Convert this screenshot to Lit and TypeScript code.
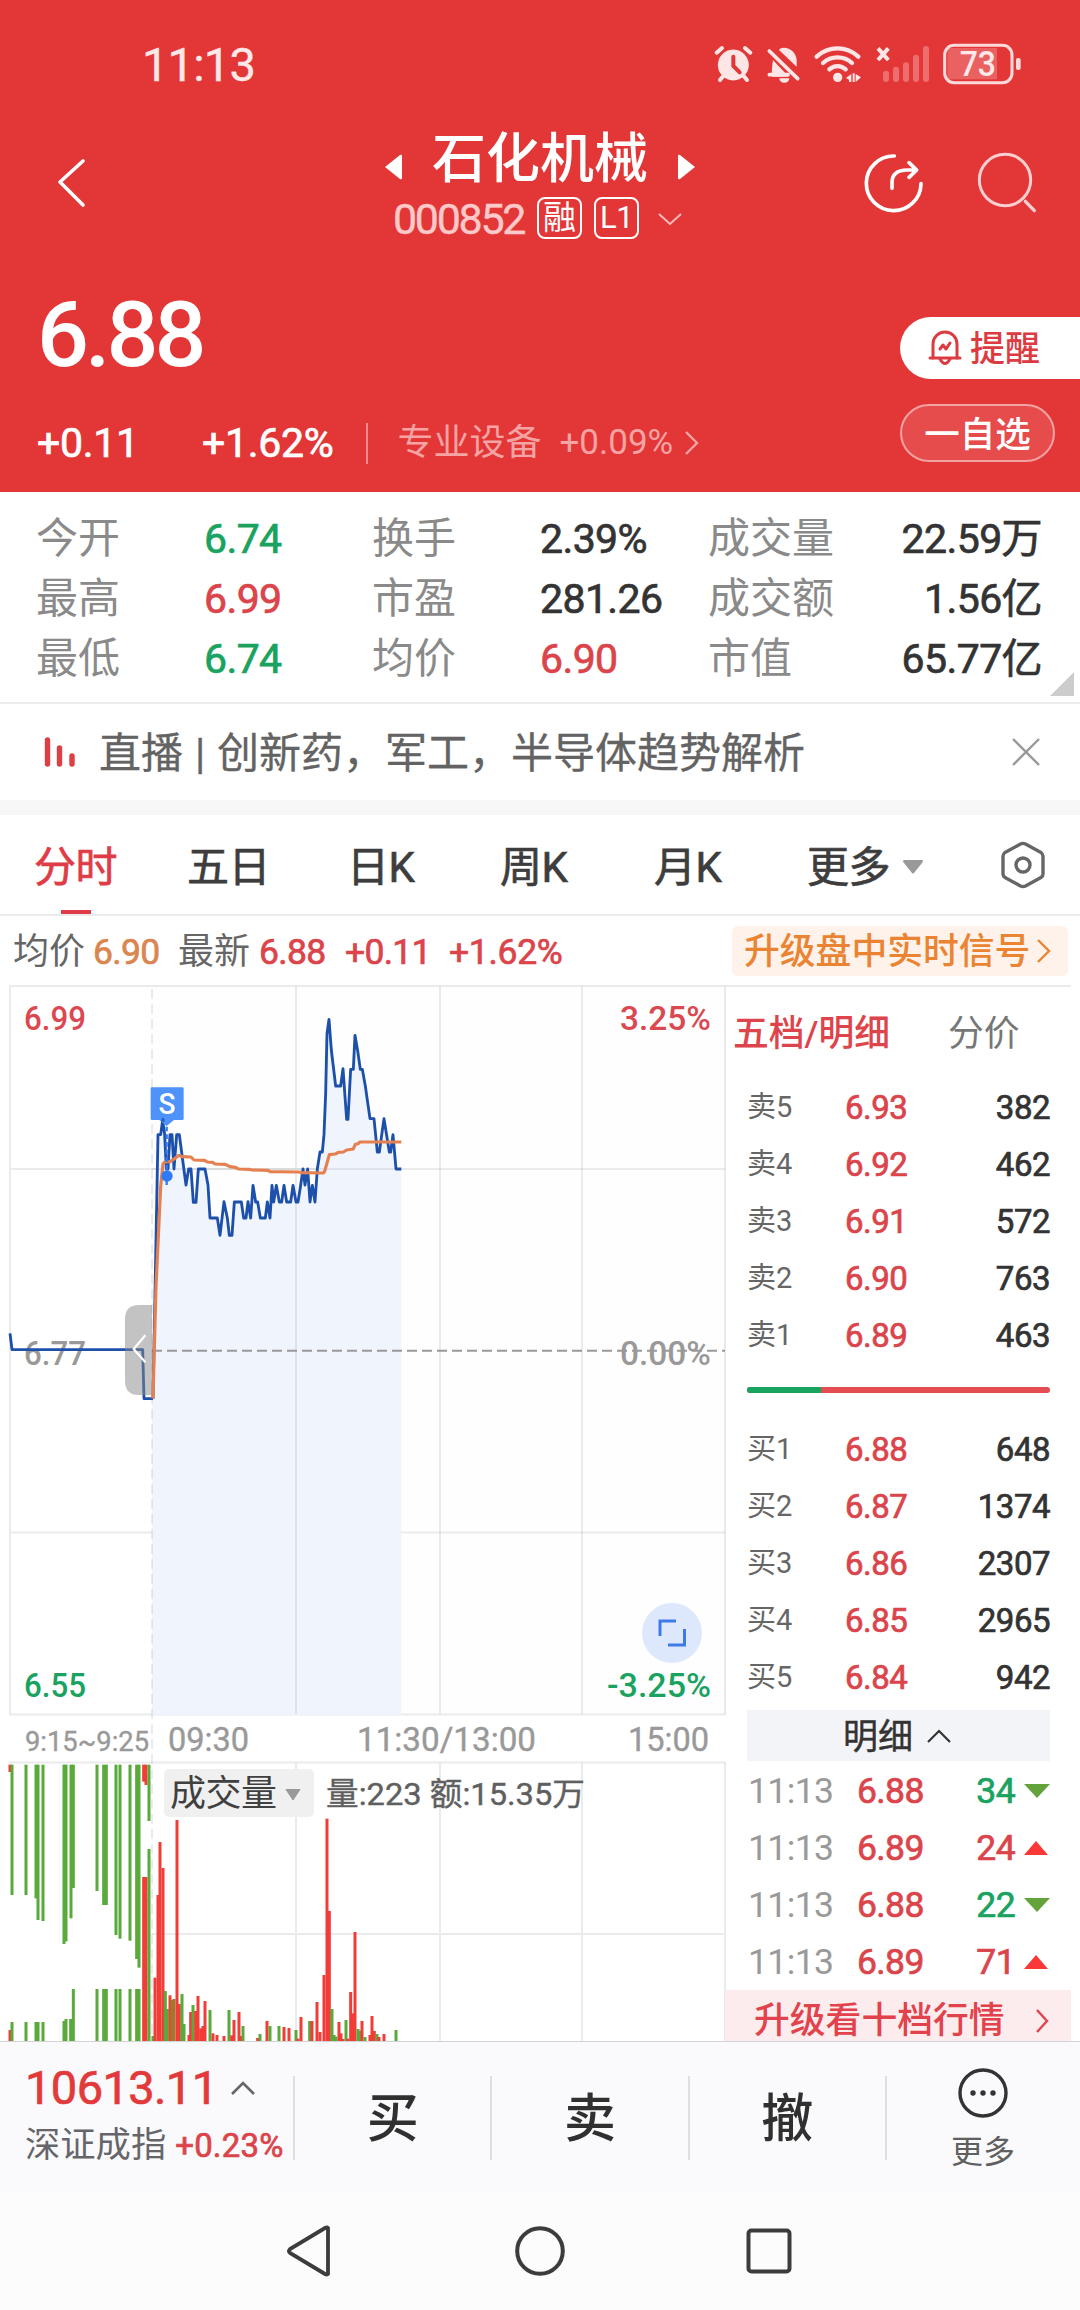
import { LitElement, html, svg, css } from "lit";
import { customElement } from "lit/decorators.js";

type Tone = "up" | "down" | "flat";

interface Stat { label: string; value: string; tone: Tone; }
interface Quote { label: string; price: string; volume: string; }
interface Trade { time: string; price: string; volume: string; tone: Tone; }

const STATS: Stat[] = [
  { label: "今开", value: "6.74", tone: "down" },
  { label: "换手", value: "2.39%", tone: "flat" },
  { label: "成交量", value: "22.59万", tone: "flat" },
  { label: "最高", value: "6.99", tone: "up" },
  { label: "市盈", value: "281.26", tone: "flat" },
  { label: "成交额", value: "1.56亿", tone: "flat" },
  { label: "最低", value: "6.74", tone: "down" },
  { label: "均价", value: "6.90", tone: "up" },
  { label: "市值", value: "65.77亿", tone: "flat" },
];

const SELLS: Quote[] = [
  { label: "卖5", price: "6.93", volume: "382" },
  { label: "卖4", price: "6.92", volume: "462" },
  { label: "卖3", price: "6.91", volume: "572" },
  { label: "卖2", price: "6.90", volume: "763" },
  { label: "卖1", price: "6.89", volume: "463" },
];

const BUYS: Quote[] = [
  { label: "买1", price: "6.88", volume: "648" },
  { label: "买2", price: "6.87", volume: "1374" },
  { label: "买3", price: "6.86", volume: "2307" },
  { label: "买4", price: "6.85", volume: "2965" },
  { label: "买5", price: "6.84", volume: "942" },
];

const TRADES: Trade[] = [
  { time: "11:13", price: "6.88", volume: "34", tone: "down" },
  { time: "11:13", price: "6.89", volume: "24", tone: "up" },
  { time: "11:13", price: "6.88", volume: "22", tone: "down" },
  { time: "11:13", price: "6.89", volume: "71", tone: "up" },
];

// Series are stored in thirds of a pixel.
const PRE_OPEN = "30,1060 36,1109 428,1109 432,1256 459,1256";
const PRICE =
  "459,1256 474,464 482,464 488,420 494,464 499,567 504,567 510,464 516,464 522,567 530,464 538,464 548,540 558,615 566,567 573,567 580,667 588,667 595,567 615,567 624,615 630,714 652,714 660,766 672,665 682,714 688,766 696,766 703,666 724,666 731,714 738,714 744,665 752,714 759,616 767,666 773,666 781,714 796,714 802,666 810,714 816,616 821,666 829,616 838,666 845,666 852,616 860,666 872,666 879,616 888,666 894,666 902,616 909,567 915,615 923,567 930,666 937,616 945,666 952,567 960,516 967,516 972,464 977,340 981,160 987,118 994,210 1007,318 1022,318 1029,266 1040,418 1044,418 1052,268 1060,268 1065,166 1073,212 1081,268 1087,268 1096,318 1110,416 1122,416 1132,516 1138,516 1152,416 1168,516 1172,516 1179,464 1188,567 1204,567";
const AVERAGE =
  "459,1256 468,920 482,620 489,552 494,546 510,545 525,535 537,526 546,530 573,531 582,540 614,541 622,546 638,547 645,552 676,553 690,560 706,562 716,567 748,568 756,570 804,571 810,575 896,576 905,578 970,579 974,574 988,524 1006,522 1015,517 1030,516 1040,510 1060,507 1066,493 1074,491 1080,486 1204,486";

type Bar = [x: number, y: number, color: "r" | "g" | "b"];

const AUCTION_TOP: Bar[] = [
  [30, 216, "r"], [36, 585, "g"], [78, 585, "g"], [108, 595, "g"], [114, 660, "g"], [129, 663, "g"],
  [192, 732, "g"], [198, 724, "g"], [213, 655, "g"], [220, 564, "g"], [291, 573, "g"], [311, 615, "g"],
  [319, 615, "g"], [348, 705, "g"], [360, 716, "g"], [390, 722, "g"], [410, 777, "g"], [417, 803, "g"],
  [431, 245, "r"], [438, 255, "r"], [447, 363, "g"],
];

const VOLUME: Bar[] = [
  [30, 990, "r"], [36, 966, "g"], [78, 966, "g"], [108, 966, "g"], [114, 966, "g"], [129, 966, "g"],
  [192, 963, "g"], [198, 957, "g"], [212, 957, "g"], [220, 867, "g"], [291, 867, "g"], [311, 867, "g"],
  [319, 867, "g"], [348, 867, "g"], [360, 867, "g"], [390, 867, "g"], [410, 867, "g"], [417, 867, "g"],
  [431, 531, "r"], [438, 531, "r"], [447, 447, "g"], [459, 1008, "g"], [465, 833, "r"], [474, 585, "r"],
  [480, 426, "r"], [489, 504, "r"], [496, 873, "g"], [502, 927, "g"], [510, 886, "r"], [516, 900, "b"],
  [522, 897, "b"], [531, 360, "r"], [538, 912, "r"], [546, 882, "g"], [552, 972, "g"], [567, 1005, "r"],
  [572, 936, "r"], [579, 915, "g"], [587, 933, "r"], [594, 888, "r"], [602, 985, "r"], [609, 978, "r"],
  [615, 903, "r"], [630, 930, "g"], [639, 1000, "r"], [651, 1005, "r"], [672, 1008, "r"], [687, 930, "g"],
  [695, 1006, "r"], [702, 960, "r"], [717, 936, "r"], [723, 1008, "r"], [729, 978, "g"], [773, 1014, "r"],
  [780, 1002, "g"], [801, 963, "r"], [810, 978, "g"], [837, 978, "g"], [852, 981, "r"], [867, 984, "r"],
  [888, 990, "g"], [894, 1016, "r"], [903, 951, "r"], [929, 963, "g"], [936, 963, "r"], [951, 906, "r"],
  [960, 996, "r"], [972, 825, "r"], [981, 356, "r"], [988, 633, "r"], [996, 927, "g"], [1002, 1005, "g"],
  [1008, 1010, "g"], [1017, 966, "r"], [1023, 1000, "r"], [1029, 1017, "r"], [1038, 960, "g"],
  [1044, 1016, "r"], [1052, 876, "r"], [1059, 940, "r"], [1065, 696, "r"], [1074, 987, "g"],
  [1080, 992, "g"], [1086, 963, "r"], [1095, 1011, "g"], [1110, 1005, "r"], [1116, 948, "r"],
  [1123, 993, "r"], [1131, 1002, "g"], [1137, 1011, "r"], [1152, 1002, "r"], [1188, 990, "g"],
];

const BAR_COLOR = { r: "#f23c37", g: "#58aa3b", b: "#a07a2c" };

const FONT = css`
  :host {
    display: block;
    font-family: Roboto, "Noto Sans CJK SC", sans-serif;
  }
  * { box-sizing: border-box; }
  svg { display: block; flex: none; }
  .up { color: #db444a; }
  .down { color: #1aa260; }
  .flat { color: #333; }
  .fig { font-weight: 400; -webkit-text-stroke: 0.7px currentColor; }
`;

@customElement("stock-header")
class StockHeader extends LitElement {
  static styles = [FONT, css`
    :host { background: #e23637; height: 492px; color: #fff; }
    .status { display: flex; height: 130px; padding: 30px 0 0 142px; justify-content: space-between; }
    .clock { font-size: 47px; line-height: 70px; color: #ffe8e8; letter-spacing: -0.8px; -webkit-text-stroke: 0.4px currentColor; }
    .title { display: flex; height: 130px; }
    .back { margin: 27px 0 0 53px; }
    .center { display: flex; flex-direction: column; align-items: center; width: 330px; margin-left: 286px; }
    .name-row { display: flex; align-items: center; justify-content: space-between; width: 312px; height: 60px; }
    .name { font-size: 54px; line-height: 60px; font-weight: 500; }
    .arrow { margin-top: 13px; }
    .code-row { display: flex; align-items: center; height: 44px; margin-top: 7px; width: 300px; }
    .code { font-size: 43px; line-height: 44px; color: #ffc9c9; letter-spacing: -2.3px; width: 147px; padding-left: 3px; -webkit-text-stroke: 0.4px currentColor; }
    .tag { width: 45px; height: 42px; border: 2px solid #fff; border-radius: 8px; display: flex; align-items: center; justify-content: center; line-height: 38px; margin-top: -2px; }
    .tag-cn { font-size: 33px; margin-right: 12px; }
    .tag-lv { font-size: 31px; margin-right: 19px; letter-spacing: -0.5px; }
    .tools { margin: 20px 0 0 auto; }
    .body { display: flex; justify-content: space-between; height: 232px; }
    .left { padding: 31px 0 0 37px; }
    .price { font-size: 91.5px; line-height: 88px; font-weight: 500; letter-spacing: -4px; }
    .change { display: flex; align-items: center; height: 44px; margin-top: 42px; font-size: 41px; line-height: 44px; letter-spacing: -0.3px; }
    .delta { width: 165px; }
    .percent { width: 164px; }
    .rule { width: 1.5px; height: 41px; background: #ee8a8a; }
    .sector { margin-left: 30px; font-size: 36px; font-weight: 400; color: #f6a3a4; letter-spacing: 0; width: 162px; }
    .sector-pct { font-size: 35px; font-weight: 400; color: #f6a3a4; letter-spacing: 0; width: 124px; }
    .right { display: flex; flex-direction: column; width: 180px; padding-top: 57px; gap: 25px; }
    .remind { display: flex; align-items: center; height: 62px; background: #fff; border-radius: 31px 0 0 31px; color: #dc3b41; font-size: 35px; padding-left: 28px; gap: 8px; line-height: 60px; font-weight: 500; }
    .remind span { padding-top: 3px; }
    .watch { width: 155px; height: 58px; border: 2px solid #f2a2a2; border-radius: 29px; background: #e74c4d; font-size: 35.5px; line-height: 54px; font-weight: 500; display: flex; align-items: center; justify-content: center; padding-top: 3px; }
  `];

  render() {
    return html`
      <div class="status">
        <div class="clock">11:13</div>
        <svg width="380" height="60" viewBox="0 0 1140 180">
          <g fill="#ffe6e6" stroke="#ffe6e6" stroke-linecap="round">
            <circle cx="100" cy="105" r="46"></circle>
            <path d="M50 68 L66 54 M151 68 L135 54 M70 138 L60 150 M131 138 L141 150" stroke-width="12" fill="none"></path>
            <path d="M100 80 V108 L119 127" stroke="#e23637" stroke-width="12" fill="none"></path>
            <path d="M216 140 C215 118 217 104 219 90 L266 140 Z M240 56 C256 48 287 58 290 90 V110 L237 60 Z" stroke="none"></path>
            <path d="M208 63 L293 146 M208 134 H264" stroke-width="11" fill="none"></path>
            <path d="M238 145 A15 13 0 0 0 268 145 Z" stroke="none"></path>
            <g fill="none" stroke-width="13">
              <path d="M350 80 A91 91 0 0 1 475 80"></path>
              <path d="M369 99 A64 64 0 0 1 456 99"></path>
              <path d="M388 118 A36 36 0 0 1 437 118"></path>
            </g>
            <circle cx="413" cy="142" r="14" stroke="none"></circle>
            <path d="M438 144 L454 132 V156 H447 V149 Z M483 142 L467 156 V132 Z M458 130 h6 v26 h-6 Z" stroke="none"></path>
            <path d="M534 55 L565 90 M565 55 L534 90" stroke-width="12" stroke-linecap="butt" fill="none"></path>
          </g>
          <g stroke="#ee6d6d" stroke-width="18" stroke-linecap="round">
            <path d="M558 131 V147 M588 119 V147 M618 106 V147 M648 83 V147 M678 57 V147"></path>
          </g>
          <rect x="742" y="54" width="149" height="94" fill="#ea6161"></rect>
          <rect x="734" y="46" width="202" height="112" rx="28" fill="none" stroke="#ffdada" stroke-width="9"></rect>
          <rect x="948" y="84" width="14" height="36" rx="6" fill="#ffdada"></rect>
          <text x="779" y="138" font-size="104" font-weight="500" fill="#ffe8e8" textLength="109" lengthAdjust="spacingAndGlyphs">73</text>
        </svg>
      </div>
      <div class="title">
        <svg class="back" width="36" height="56" viewBox="0 0 36 56"><path d="M30 5 L7 26 L30 49" transform="translate(0,-1)" fill="none" stroke="#fff" stroke-width="3.6" stroke-linejoin="round" stroke-linecap="round"></path></svg>
        <div class="center">
          <div class="name-row">
            <svg class="arrow" width="19" height="28" viewBox="0 0 19 28"><path d="M1 14 L16 2 Q18 1 18 3 V25 Q18 27 16 26 Z" fill="#fff"></path></svg>
            <span class="name">石化机械</span>
            <svg class="arrow" width="19" height="28" viewBox="0 0 19 28"><path d="M18 14 L3 2 Q1 1 1 3 V25 Q1 27 3 26 Z" fill="#fff"></path></svg>
          </div>
          <div class="code-row">
            <span class="code">000852</span>
            <span class="tag tag-cn">融</span>
            <span class="tag tag-lv">L1</span>
            <svg width="24" height="14" viewBox="0 0 24 14"><path d="M1 2 L12 12 L23 2" fill="none" stroke="#fbb" stroke-width="2"></path></svg>
          </div>
        </div>
        <svg class="tools" width="230" height="66" viewBox="0 0 690 198">
          <g fill="none" stroke-linecap="round" stroke-linejoin="round">
            <path d="M133 18 A82 82 0 1 0 213 101" stroke="#fff" stroke-width="11"></path>
            <path d="M126 115 V98 Q126 60 172 60 H198 M177 38 L200 60 L177 82" stroke="#fff" stroke-width="11"></path>
            <circle cx="465" cy="90" r="77" stroke="#ffcece" stroke-width="9"></circle>
            <path d="M526 154 L553 182" stroke="#ffcece" stroke-width="10"></path>
          </g>
        </svg>
      </div>
      <div class="body">
        <div class="left">
          <div class="price">6.88</div>
          <div class="change">
            <span class="fig delta">+0.11</span>
            <span class="fig percent">+1.62%</span>
            <span class="rule"></span>
            <span class="sector">专业设备</span>
            <span class="sector-pct">+0.09%</span>
            <svg width="16" height="26" viewBox="0 0 16 26"><path d="M2 2 L13 13 L2 24" fill="none" stroke="#f6a3a4" stroke-width="2.4"></path></svg>
          </div>
        </div>
        <div class="right">
          <div class="remind">
            <svg width="34" height="36" viewBox="0 0 34 36"><g fill="none" stroke="#dc3b41" stroke-width="3" stroke-linejoin="round" stroke-linecap="round"><path d="M5 28 V14 A12 12 0 0 1 29 14 V28"></path><path d="M2 28 H32"></path><path d="M12 29 Q17 38 22 29"></path><path d="M12 19 L15 15 L18 19 L22 13"></path></g></svg>
            <span>提醒</span>
          </div>
          <div class="watch">一自选</div>
        </div>
      </div>
    `;
  }
}

@customElement("stock-stats")
class StockStats extends LitElement {
  static styles = [FONT, css`
    .grid { position: relative; height: 212px; border-bottom: 2px solid #ececec; padding: 17px 36px 0 36px; display: grid; grid-template-columns: 168px 168px 168px 168px 150px 184px; grid-auto-rows: 60px; font-size: 42px; line-height: 60px; }
    .label { color: #8a8a8a; }
    .value { letter-spacing: -0.6px; font-size: 41px; }
    .value:nth-child(6n) { text-align: right; }
    .corner { position: absolute; right: 6px; bottom: 6px; }
    .live { display: flex; align-items: center; height: 96px; padding: 0 40px 0 43px; }
    .live-text { margin-left: 24px; padding-top: 4px; font-size: 42px; line-height: 60px; color: #636363; word-spacing: 1.5px; flex: 1; -webkit-text-stroke: 0.3px currentColor; }
    .band { height: 15px; background: #f7f7f7; }
  `];

  render() {
    return html`
      <div class="grid">
        ${STATS.map((s) => html`<span class="label">${s.label}</span><span class="fig value ${s.tone}">${s.value}</span>`)}
        <svg class="corner" width="24" height="24" viewBox="0 0 24 24"><path d="M24 0 V24 H0 Z" fill="#ccc"></path></svg>
      </div>
      <div class="live">
        <svg width="32" height="32" viewBox="0 0 32 32"><path d="M4.5 4 V28 M16.5 12 V28 M29 20 V28" stroke="#dd3f45" stroke-width="5.4" stroke-linecap="round"></path></svg>
        <span class="live-text">直播 | 创新药，军工，半导体趋势解析</span>
        <svg width="28" height="28" viewBox="0 0 28 28"><path d="M1 1 L27 27 M27 1 L1 27" stroke="#999" stroke-width="2.4"></path></svg>
      </div>
      <div class="band"></div>
    `;
  }
}

@customElement("period-tabs")
class PeriodTabs extends LitElement {
  static styles = [FONT, css`
    .tabs { display: flex; height: 101px; padding-left: 34px; border-bottom: 2px solid #ebebeb; font-size: 42px; line-height: 106px; color: #3d3d3d; }
    .tab { letter-spacing: -0.4px; }
    .day5 { width: 160px; }
    .day { width: 153px; }
    .week { width: 154px; }
    .month { width: 153px; }
    .more { width: 95px; }
    .active { color: #de3c46; width: 153px; display: flex; flex-direction: column; }
    .active span { height: 95px; }
    .active i { width: 30px; height: 4px; background: #de3c46; margin-left: 27px; }
    .drop { margin: 45px 76px 0 0; }
    .hex { margin-top: 26px; }
    .info { display: flex; align-items: center; height: 69px; padding: 1px 12px 0 13px; font-size: 36px; color: #666; line-height: 50px; }
    .info > span { padding-top: 2px; }
    .num { letter-spacing: -0.7px; font-size: 35.5px; }
    .avg-label { width: 80px; }
    .avg { color: #d98650; width: 85px; }
    .now-label { width: 81px; }
    .now { width: 86px; }
    .delta { width: 104px; }
    .pct { flex: 1; letter-spacing: -0.3px; }
    .signal { display: flex; align-items: center; width: 336px; height: 50px; background: #fef2ea; border-radius: 6px; color: #ea8432; padding-left: 12px; line-height: 50px; gap: 6px; font-size: 35.8px; font-weight: 500; }
    .signal span { padding-top: 2px; }
  `];

  render() {
    return html`
      <div class="tabs">
        <div class="fig tab active"><span>分时</span><i></i></div>
        <div class="fig tab day5">五日</div>
        <div class="fig tab day">日K</div>
        <div class="fig tab week">周K</div>
        <div class="fig tab month">月K</div>
        <div class="fig tab more">更多</div>
        <svg class="drop" width="22" height="14" viewBox="0 0 22 14"><path d="M2 0 H20 Q22 1 20 3 L12 13 Q11 14 10 13 L2 3 Q0 1 2 0 Z" fill="#999"></path></svg>
        <svg class="hex" width="46" height="48" viewBox="0 0 46 48"><g fill="none" stroke="#666" stroke-width="3.4" stroke-linejoin="round"><path d="M20.500 3 Q23 1.800 25.500 3 L41 11.500 Q43 13 43 15 V33 Q43 35 41 36.500 L25.500 45 Q23 46.200 20.500 45 L5 36.500 Q3 35 3 33 V15 Q3 13 5 11.500 Z"></path><circle cx="23" cy="24" r="7"></circle></g></svg>
      </div>
      <div class="info">
        <span class="avg-label">均价</span><span class="fig num avg">6.90</span>
        <span class="now-label">最新</span><span class="fig num now up">6.88</span>
        <span class="fig num delta up">+0.11</span><span class="fig num pct up">+1.62%</span>
        <div class="signal">
          <span>升级盘中实时信号</span>
          <svg width="15" height="24" viewBox="0 0 15 24"><path d="M2 1 L13 12 L2 23" fill="none" stroke="#ea8432" stroke-width="2.4"></path></svg>
        </div>
      </div>
    `;
  }
}

@customElement("trend-chart")
class TrendChart extends LitElement {
  static styles = [FONT, css`
    text { font-family: Roboto, "Noto Sans CJK SC", sans-serif; }
    .flag, .med { font-weight: 500; }
  `];

  private bar([x, y, c]: Bar, base: number) {
    const top = Math.min(y, base);
    return svg`<rect x=${x - 4.5} y=${top} width="9" height=${Math.abs(base - y)} fill=${BAR_COLOR[c]}></rect>`;
  }

  private label(x: number, y: number, w: number, size: number, fill: string, text: string) {
    return svg`<text class="med" x=${x} y=${y} font-size=${size} fill=${fill} textLength=${w} lengthAdjust="spacingAndGlyphs">${text}</text>`;
  }

  render() {
    return html`
      <svg width="726" height="1056" viewBox="0 985 726 1056">
        <path d="M152 1389 V985 H726 V1714 H152 Z" fill="#fefefe"></path>
        <g fill="none" stroke="#ebebeb" stroke-width="2">
          <path d="M9 986 H726 M10 986 V1714.500 M9 1169 H725 M9 1532.500 H725 M9 1714.500 H726 M9 1762.500 H726"></path>
        </g>
        <g transform="translate(0 980) scale(.33333)">
          <path d=${`M456 2204 L456 1256 L${PRICE.replace(/ /g, " L")} L1204 2204 Z`} fill="#eff4fd"></path>
        </g>
        <g fill="none" stroke="#9fa3ab" stroke-opacity="0.22" stroke-width="2">
          <path d="M296 986 V1714 M440 986 V1714 M582 986 V1714 M725 986 V1714 M296 1763 V2041 M440 1763 V2041 M582 1763 V2041 M725 1763 V2041 M152 1934 H725 M152 1169 H401"></path>
          <path d="M152 989 V2041" stroke-dasharray="10 5"></path>
        </g>
        <path d="M152 1350.700 H725" stroke="#999" stroke-width="2" stroke-dasharray="10 5"></path>
        ${this.label(24, 1030, 62, 32.5, "#db4850", "6.99")}
        ${this.label(24, 1364.7, 62, 32.5, "#999", "6.77")}
        ${this.label(24, 1697, 62, 32.5, "#1aa260", "6.55")}
        ${this.label(620, 1030, 91, 32.5, "#db4850", "3.25%")}
        ${this.label(620, 1364.7, 91, 32.5, "#999", "0.00%")}
        ${this.label(607, 1697, 104, 32.5, "#1aa260", "-3.25%")}
        <g fill="#999" stroke="#999" stroke-width="0.400" font-size="32.500">
          <text x="25" y="1750.700" font-size="28" textLength="124" lengthAdjust="spacingAndGlyphs">9:15~9:25</text>
          <text x="168" y="1750.700" textLength="81" lengthAdjust="spacingAndGlyphs">09:30</text>
          <text x="357" y="1750.700" textLength="179" lengthAdjust="spacingAndGlyphs">11:30/13:00</text>
          <text x="628" y="1750.700" textLength="81" lengthAdjust="spacingAndGlyphs">15:00</text>
        </g>
        <g transform="translate(0 980) scale(.33333)" fill="none" stroke-linejoin="round">
          <polyline points=${PRE_OPEN} stroke="#1d50ab" stroke-width="8.500"></polyline>
          <path d="M456 975 H417 Q375 975 375 1017 V1203 Q375 1245 417 1245 H456 Z" fill="#888" fill-opacity="0.5"></path>
          <polyline points=${PRICE} stroke="#1d50ab" stroke-width="8.500"></polyline>
          <polyline points=${AVERAGE} stroke="#e58150" stroke-width="9.500"></polyline>
          <path d="M436 1066 L401 1107 L436 1147" stroke="#fff" stroke-width="7"></path>
          <path d="M500 440 V618" stroke="#2f7af5" stroke-width="7" stroke-dasharray="14 9"></path>
          <circle cx="501" cy="588" r="17" fill="#2f7af5"></circle>
          <path d="M456 322 H547 Q551 322 551 326 V416 Q551 420 547 420 H522 L500 438 L478 420 H456 Q452 420 452 416 V326 Q452 322 456 322 Z" fill="#4f92fb"></path>
          <path d="M484 425 Q484 413 489 413 Q494 413 494 425 Z" fill="#1d62c8"></path>
        </g>
        <text class="flag" x="158.500" y="1114" font-size="29" fill="#fff" textLength="17" lengthAdjust="spacingAndGlyphs">S</text>
        <circle cx="672" cy="1633" r="30" fill="#dee8fd"></circle>
        <path d="M660 1636 V1621 H676 M668 1645 H684.500 V1629" fill="none" stroke="#3f7ae6" stroke-width="3"></path>
        <g transform="translate(0 1700) scale(.33333)">
          ${AUCTION_TOP.map((b) => this.bar(b, 194))}
          ${VOLUME.map((b) => this.bar(b, 1023))}
        </g>
        <rect x="164" y="1769" width="150" height="48" rx="5" fill="#f0f0f0"></rect>
        <text x="170" y="1806" font-size="36" fill="#404040" textLength="107">成交量</text>
        <path d="M286 1789.500 H300 L293 1800 Z" fill="#999" stroke="#999" stroke-linejoin="round"></path>
        <text x="326" y="1804.500" font-size="32" fill="#5f5f5f" stroke="#5f5f5f" stroke-width="0.400" textLength="259" lengthAdjust="spacingAndGlyphs">量:223 额:15.35万</text>
      </svg>
    `;
  }
}

@customElement("order-book")
class OrderBook extends LitElement {
  static styles = [FONT, css`
    :host { width: 346px; margin-right: 9px; display: flex; flex-direction: column; border-top: 2px solid #ebebeb; }
    .heads { display: flex; height: 92px; padding: 2px 0 0 8px; font-size: 35.8px; line-height: 90px; color: #777; }
    .heads .on { width: 215px; color: #de444b; font-weight: 500; }
    .quote { display: grid; grid-template-columns: 98px 80px 1fr; height: 57px; line-height: 57px; padding: 0 21px 0 22px; }
    .label { color: #666; font-weight: 400; font-size: 29px; white-space: nowrap; }
    .price { font-size: 33px; letter-spacing: -0.5px; }
    .vol { font-size: 33px; letter-spacing: -0.5px; text-align: right; color: #333; }
    .ratio { display: flex; height: 6px; margin: 23px 21px 28px 22px; border-radius: 3px; overflow: hidden; background: #e34c50; }
    .ratio i { width: 74px; background: #17a45e; }
    .toggle { display: flex; align-items: center; justify-content: center; gap: 14px; height: 51px; margin: 4px 21px 1px 22px; background: #f3f4f8; font-size: 35px; line-height: 49px; color: #333; }
    .toggle span { padding-top: 4px; margin-left: -3px; -webkit-text-stroke: 0.4px currentColor; }
    .trade { display: grid; grid-template-columns: 109px 76px 1fr 35px; align-items: center; height: 57px; line-height: 57px; padding: 0 21px 0 23px; font-size: 35.5px; letter-spacing: -0.6px; }
    .trade span { padding-top: 1px; }
    .time { color: #999; letter-spacing: -0.6px; }
    .qty { text-align: right; }
    .mark { justify-self: end; }
    .promo { display: flex; align-items: flex-start; justify-content: space-between; height: 51px; padding: 13px 22px 0 29px; background: #fdecee; color: #e2424b; font-size: 35.8px; line-height: 36px; font-weight: 500; }
    .promo svg { margin-top: 6px; }
  `];

  private quote(q: Quote) {
    return html`<div class="quote"><span class="label">${q.label}</span><span class="fig price up">${q.price}</span><span class="fig vol">${q.volume}</span></div>`;
  }

  render() {
    return html`
      <div class="heads"><span class="on">五档/明细</span><span>分价</span></div>
      ${SELLS.map((q) => this.quote(q))}
      <div class="ratio"><i></i></div>
      ${BUYS.map((q) => this.quote(q))}
      <div class="toggle">
        <span>明细</span>
        <svg width="24" height="14" viewBox="0 0 24 14"><path d="M1 13 L12 2 L23 13" fill="none" stroke="#333" stroke-width="2.2"></path></svg>
      </div>
      ${TRADES.map((t) => html`
        <div class="trade">
          <span class="time">${t.time}</span>
          <span class="fig up">${t.price}</span>
          <span class="fig qty ${t.tone}">${t.volume}</span>
          <svg class="mark" width="26" height="14" viewBox="0 0 26 14">
            ${t.tone === "up" ? svg`<path d="M0 14 L12 0 L24 14 Z" fill="#f93837"></path>` : svg`<path d="M0 0 H26 L13 14 Z" fill="#64a33c"></path>`}
          </svg>
        </div>`)}
      <div class="promo">
        <span>升级看十档行情</span>
        <svg width="14" height="24" viewBox="0 0 14 24"><path d="M2 1 L12 12 L2 23" fill="none" stroke="#e2424b" stroke-width="2.4"></path></svg>
      </div>
    `;
  }
}

@customElement("trade-bar")
class TradeBar extends LitElement {
  static styles = [FONT, css`
    .bar { display: flex; align-items: center; height: 151px; background: #fafafc; border-top: 1px solid #d3d3d6; }
    .index { display: flex; flex-direction: column; width: 293px; padding-left: 25px; height: 150px; padding-top: 18px; }
    .top { display: flex; align-items: center; height: 56px; }
    .points { width: 206px; font-size: 47px; line-height: 56px; letter-spacing: -0.6px; color: #e2393b; white-space: nowrap; }
    .sub { display: flex; height: 50px; margin-top: 4px; font-size: 35.3px; line-height: 50px; color: #66666a; }
    .sub .pct { font-size: 33px; line-height: 51px; letter-spacing: 0.2px; margin-left: 9px; }
    .rule { width: 2px; height: 84px; background: #dededf; margin-top: 1px; }
    .act { width: 195.3px; text-align: center; font-size: 52px; line-height: 80px; font-weight: 500; color: #303030; padding-top: 6px; }
    .more { flex: 1; display: flex; flex-direction: column; align-items: center; font-size: 32px; line-height: 44px; color: #606060; gap: 12px; padding-top: 7px; margin-left: -1px; }
    .nav { display: flex; height: 118px; background: #fcfcfc; padding: 32px 0 0 285px; }
    .home { margin-left: 181px; }
    .recent { margin-left: 178px; }
  `];

  render() {
    return html`
      <div class="bar">
        <div class="index">
          <div class="top">
            <span class="fig points">10613.11</span>
            <svg width="24" height="15" viewBox="0 0 24 15"><path d="M1 13 L12 2 L23 13" fill="none" stroke="#666" stroke-width="2.6"></path></svg>
          </div>
          <div class="sub"><span>深证成指</span><span class="fig pct up">+0.23%</span></div>
        </div>
        <div class="rule"></div><div class="act">买</div>
        <div class="rule"></div><div class="act">卖</div>
        <div class="rule"></div><div class="act">撤</div>
        <div class="rule"></div>
        <div class="more">
          <svg width="50" height="50" viewBox="0 0 50 50"><circle cx="25" cy="25" r="23" fill="none" stroke="#333" stroke-width="3.400"></circle><g fill="#333"><circle cx="15" cy="25" r="2.700"></circle><circle cx="25" cy="25" r="2.700"></circle><circle cx="35" cy="25" r="2.700"></circle></g></svg>
          <span>更多</span>
        </div>
      </div>
      <div class="nav">
        <svg width="48" height="54" viewBox="0 0 48 54"><path d="M43 4 V50 Q42 51 40 50 L5 29 Q3 27 5 25 L40 4 Q42 3 43 4 Z" fill="none" stroke="#3c3c3c" stroke-width="3.800"></path></svg>
        <svg class="home" width="52" height="54" viewBox="0 0 52 54"><circle cx="26" cy="27" r="22.800" fill="none" stroke="#3c3c3c" stroke-width="4"></circle></svg>
        <svg class="recent" width="50" height="54" viewBox="0 0 50 54"><rect x="4.500" y="6.500" width="41" height="41" rx="3" fill="none" stroke="#3c3c3c" stroke-width="4"></rect></svg>
      </div>
    `;
  }
}

@customElement("app-root")
class AppRoot extends LitElement {
  static styles = css`
    :host { display: block; width: 1080px; height: 2310px; background: #fff; overflow: hidden; }
    .main { display: flex; height: 1056px; }
    .chart { flex: none; width: 725px; }
  `;

  render() {
    return html`
      <stock-header></stock-header>
      <stock-stats></stock-stats>
      <period-tabs></period-tabs>
      <div class="main">
        <trend-chart class="chart"></trend-chart>
        <order-book></order-book>
      </div>
      <trade-bar></trade-bar>
    `;
  }
}
